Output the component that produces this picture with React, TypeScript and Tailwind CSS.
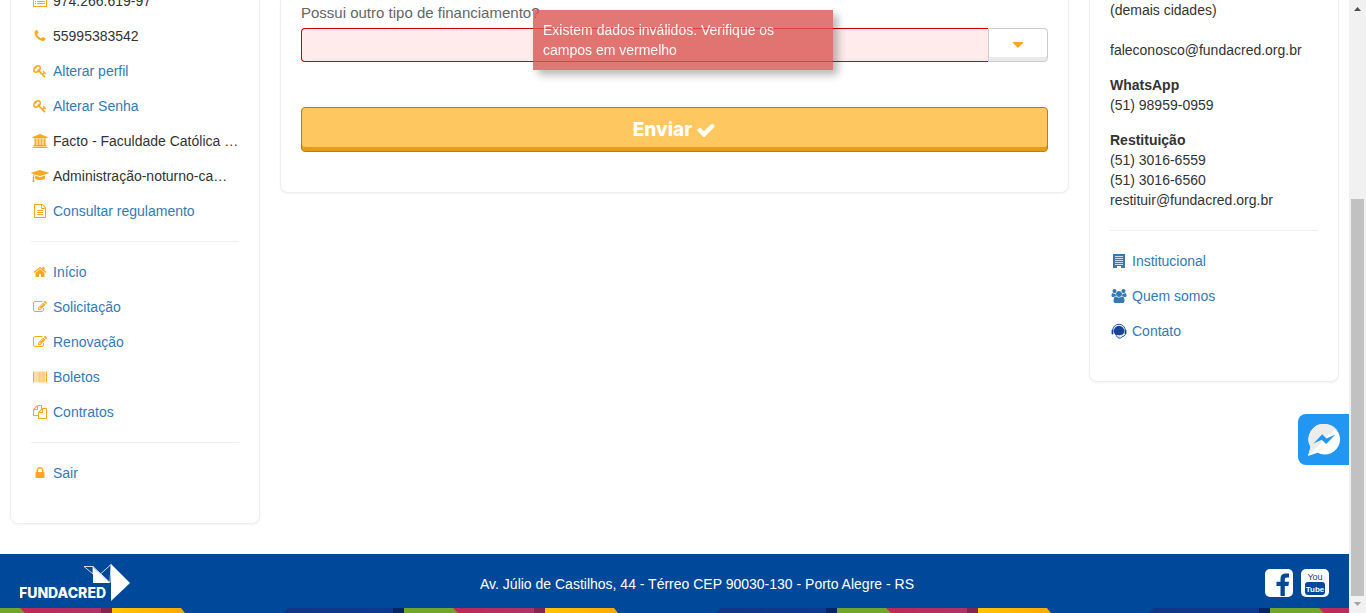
import type { ReactNode } from "react";

const paths = {
  phone:
    "M1600 1240q0 27-10 70.5t-21 68.5q-21 50-122 106-94 51-186 51-27 0-53-3.5t-57.5-12.5-47-14.5-55.5-20.5-49-18q-98-35-175-83-127-79-264-216t-216-264q-48-77-83-175-3-9-18-49t-20.5-55.5-14.5-47-12.5-57.5-3.5-53q0-92 51-186 56-101 106-122 25-11 68.5-21t70.5-10q14 0 21 3 18 6 53 76 11 19 30 54t35 63.5 31 53.5q3 4 17.5 25t21.5 35.5 7 28.5q0 20-28.5 50t-62 55-62 53-28.5 46q0 9 5 22.5t8.5 20.5 14 24 11.5 19q76 137 174 235t235 174q2 1 19 11.5t24 14 20.5 8.5 22.5 5q18 0 46-28.5t53-62 55-62 50-28.5q14 0 28.5 7t35.5 21.5 25 17.5q25 15 53.5 31t63.5 35 54 30q70 35 76 53 3 7 3 21z",
  key: "M832 512q0-80-56-136t-136-56-136 56-56 136q0 42 19 83-41-19-83-19-80 0-136 56t-56 136 56 136 136 56 136-56 56-136q0-42-19-83 41 19 83 19 80 0 136-56t56-136zm851 704q0 17-49 66t-66 49q-9 0-28.5-16t-36.5-33-38.5-40-24.5-26l-96 96 220 220q28 28 28 68 0 42-39 81t-81 39q-40 0-68-28l-671-671q-176 131-365 131-163 0-265.5-102.5t-102.5-265.5q0-160 95-313t248-248 313-95q163 0 265.5 102.5t102.5 265.5q0 189-131 365l355 355 96-96q-3-3-26-24.5t-40-38.5-33-36.5-16-28.5q0-17 49-66t66-49q13 0 23 10 6 6 46 44.5t82 79.5 86.5 86 73 78 28.5 41z",
  bank: "M960 0l960 384v128h-128q0 26-20.5 45t-48.5 19h-1526q-28 0-48.5-19t-20.5-45h-128v-128zm-704 640h256v768h128v-768h256v768h128v-768h256v768h128v-768h256v768h59q28 0 48.5 19t20.5 45v64h-1664v-64q0-26 20.5-45t48.5-19h59v-768zm1595 960q28 0 48.5 19t20.5 45v128h-1920v-128q0-26 20.5-45t48.5-19h1782z",
  cap: "M1774 836l18 316q4 69-82 128t-235 93.5-323 34.5-323-34.5-235-93.5-82-128l18-316 574 181q22 7 48 7t48-7zm530-324q0 23-22 31l-1120 352q-4 1-10 1t-10-1l-652-206q-43 34-71 111.5t-34 178.5q63 36 63 109 0 69-58 107l58 433q2 14-8 25-9 11-24 11h-192q-15 0-24-11-10-11-8-25l58-433q-58-38-58-107 0-73 65-111 11-207 98-330l-333-104q-22-8-22-31t22-31l1120-352q4-1 10-1t10 1l1120 352q22 8 22 31z",
  file: "M1596 380q28 28 48 76t20 88v1152q0 40-28 68t-68 28h-1344q-40 0-68-28t-28-68v-1600q0-40 28-68t68-28h896q40 0 88 20t76 48zm-444-244v376h376q-10-29-22-41l-313-313q-12-12-41-22zm384 1528v-1024h-416q-40 0-68-28t-28-68v-416h-768v1536h1280zm-1024-864q0-14 9-23t23-9h704q14 0 23 9t9 23v64q0 14-9 23t-23 9h-704q-14 0-23-9t-9-23v-64zm736 224q14 0 23 9t9 23v64q0 14-9 23t-23 9h-704q-14 0-23-9t-9-23v-64q0-14 9-23t23-9h704zm0 256q14 0 23 9t9 23v64q0 14-9 23t-23 9h-704q-14 0-23-9t-9-23v-64q0-14 9-23t23-9h704z",
  home: "M1472 992v480q0 26-19 45t-45 19h-384v-384h-256v384h-384q-26 0-45-19t-19-45v-480q0-1 .5-3t.5-3l575-474 575 474q1 2 1 6zm223-69l-62 74q-8 9-21 11h-3q-13 0-21-7l-692-577-692 577q-12 8-24 7-13-2-21-11l-62-74q-8-10-7-23.5t11-21.5l719-599q32-26 76-26t76 26l244 204v-195q0-14 9-23t23-9h192q14 0 23 9t9 23v408l219 182q10 8 11 21.5t-7 23.5z",
  edit: "M888 1184l116-116-152-152-116 116v56h96v96h56zm440-720q-16-16-33 1l-350 350q-17 17-1 33t33-1l350-350q17-17 1-33zm80 594v190q0 119-84.5 203.5t-203.5 84.5h-832q-119 0-203.5-84.5t-84.5-203.5v-832q0-119 84.5-203.5t203.5-84.5h832q63 0 117 25 15 7 18 23 3 17-9 29l-49 49q-14 14-32 8-23-6-45-6h-832q-66 0-113 47t-47 113v832q0 66 47 113t113 47h832q66 0 113-47t47-113v-126q0-13 9-22l64-64q15-15 35-7t20 29zm-96-738l288 288-672 672h-288v-288zm444 132l-92 92-288-288 92-92q28-28 68-28t68 28l152 152q28 28 28 68t-28 68z",
  barcode:
    "M0 200h120v1392h-120zM190 200h50v1392h-50zM310 200h50v1392h-50zM430 200h50v1392h-50zM590 200h110v1392h-110zM820 200h110v1392h-110zM990 200h50v1392h-50zM1110 200h110v1392h-110zM1340 200h110v1392h-110zM1510 200h60v1392h-60zM1670 200h122v1392h-122z",
  copy: "M1696 384q40 0 68 28t28 68v1216q0 40-28 68t-68 28h-960q-40 0-68-28t-28-68v-288h-544q-40 0-68-28t-28-68v-672q0-40 20-88t48-76l408-408q28-28 76-48t88-20h416q40 0 68 28t28 68v328q68-40 128-40h416zm-544 213l-299 299h299v-299zm-640-384l-299 299h299v-299zm196 647l316-316v-416h-384v416q0 40-28 68t-68 28h-416v640h512v-256q0-40 20-88t48-76zm956 804v-1152h-384v416q0 40-28 68t-68 28h-416v640h896z",
  lock: "M640 768h512v-192q0-106-75-181t-181-75-181 75-75 181v192zm832 96v576q0 40-28 68t-68 28h-960q-40 0-68-28t-28-68v-576q0-40 28-68t68-28h32v-192q0-184 132-316t316-132 316 132 132 316v192h32q40 0 68 28t28 68z",
  check:
    "M1671 566q0 40-28 68l-724 724-136 136q-28 28-68 28t-68-28l-136-136-362-362q-28-28-28-68t28-68l136-136q28-28 68-28t68 28l294 295 656-657q28-28 68-28t68 28l136 136q28 28 28 68z",
  users:
    "M593 896q-162 5-265 128h-134q-82 0-138-40.5t-56-118.5q0-353 124-353 6 0 43.5 21t97.5 42.5 119 21.5q67 0 133-23-5 37-5 66 0 139 81 256zm1071 637q0 120-73 189.5t-194 69.5h-874q-121 0-194-69.5t-73-189.5q0-53 3.5-103.5t14-109 26.5-108.5 43-97.5 62-81 85.5-53.5 111.5-20q10 0 43 21.5t73 48 107 48 135 21.5 135-21.5 107-48 73-48 43-21.5q61 0 111.5 20t85.5 53.5 62 81 43 97.5 26.5 108.5 14 109 3.5 103.5zm-1024-1277q0 106-75 181t-181 75-181-75-75-181 75-181 181-75 181 75 75 181zm704 384q0 159-112.5 271.5t-271.5 112.5-271.5-112.5-112.5-271.5 112.5-271.5 271.5-112.5 271.5 112.5 112.5 271.5zm576 225q0 78-56 118.5t-138 40.5h-134q-103-123-265-128 81-117 81-256 0-29-5-66 66 23 133 23 59 0 119-21.5t97.5-42.5 43.5-21q124 0 124 353zm-128-609q0 106-75 181t-181 75-181-75-75-181 75-181 181-75 181 75 75 181z",
  card: "M0 128h1792v1536h-1792zM128 512v1024h1536v-1024zM256 640h128v128h-128zM512 640h1024v128h-1024zM256 896h128v128h-128zM512 896h1024v128h-1024zM256 1152h128v128h-128zM512 1152h1024v128h-1024z",
  building:
    "M128 0h1536v1792h-512v-256h-512v256h-512zM384 256v110h1024v-110zM384 512v110h1024v-110zM384 768v110h1024v-110zM384 1024v110h1024v-110zM384 1280v110h1024v-110z",
};

type IconName = keyof typeof paths;

function Icon({ name, className = "h-[14px] w-[14px]", width = 1792 }: { name: IconName; className?: string; width?: number }) {
  return (
    <svg viewBox={`0 0 ${width} 1792`} className={className} fill="currentColor" fillRule={name === "card" || name === "building" ? "evenodd" : "nonzero"} aria-hidden="true">
      <path d={paths[name]} />
    </svg>
  );
}

function HeadsetIcon() {
  return (
    <svg viewBox="0 0 16 16" className="h-4 w-4" aria-hidden="true">
      <circle cx="8" cy="8" r="5.200" fill="#17429b" />
      <path d="M1.700 8.500V7.500a6.300 6.300 0 0 1 12.600 0v1" fill="none" stroke="#17429b" strokeWidth="0.9" />
      <rect x="0.600" y="6.500" width="1.800" height="5" rx="0.900" fill="#17429b" />
      <rect x="13.600" y="6.500" width="1.800" height="5" rx="0.900" fill="#17429b" />
      <path d="M6 12.400q3 1 5.500-.6" fill="none" stroke="#fff" strokeWidth="0.9" />
      <path d="M5.500 13q1.500 2.600 4 2.200l1.200-1.200q2.200-.3 3.500-2.500" fill="none" stroke="#17429b" strokeWidth="1" />
    </svg>
  );
}

function Item({ icon, children, href }: { icon: ReactNode; children: ReactNode; href?: string }) {
  const inner = (
    <>
      <span className="flex w-[18px] shrink-0 justify-center">{icon}</span>
      <span className="whitespace-nowrap">{children}</span>
    </>
  );
  return (
    <li className="h-5">
      {href ? (
        <a href={href} className="flex items-center gap-1 text-[#337ab7]">
          {inner}
        </a>
      ) : (
        <div className="flex items-center gap-1">{inner}</div>
      )}
    </li>
  );
}

const card = "rounded-b-lg border border-t-0 border-[#eee] bg-white px-5 shadow-[0_1px_2px_rgba(0,0,0,0.05)]";
const list = "flex flex-col gap-[15px]";

function Orange({ name }: { name: IconName }) {
  return <Icon name={name} className="h-[14px] w-[14px] text-[#ffa81f]" />;
}

function ProfilePanel() {
  return (
    <aside className={`${card} pb-10`}>
      <ul className={`${list} -mt-[9px]`}>
        <Item icon={<Orange name="card" />}>974.266.619-97</Item>
        <Item icon={<Orange name="phone" />}>55995383542</Item>
        <Item href="#perfil" icon={<Orange name="key" />}>Alterar perfil</Item>
        <Item href="#senha" icon={<Orange name="key" />}>Alterar Senha</Item>
        <Item icon={<Icon name="bank" width={1920} className="h-[14px] w-4 text-[#ffa81f]" />}>Facto - Faculdade Católica …</Item>
        <Item icon={<Icon name="cap" width={2304} className="h-[14px] w-[18px] text-[#ffa81f]" />}>Administração-noturno-ca…</Item>
        <Item href="#regulamento" icon={<Orange name="file" />}>Consultar regulamento</Item>
      </ul>
      <hr className="my-5 border-[#eee]" />
      <nav aria-label="Menu">
        <ul className={list}>
          <Item href="#inicio" icon={<Orange name="home" />}>Início</Item>
          <Item href="#solicitacao" icon={<Orange name="edit" />}>Solicitação</Item>
          <Item href="#renovacao" icon={<Orange name="edit" />}>Renovação</Item>
          <Item href="#boletos" icon={<Orange name="barcode" />}>Boletos</Item>
          <Item href="#contratos" icon={<Orange name="copy" />}>Contratos</Item>
        </ul>
      </nav>
      <hr className="my-5 border-[#eee]" />
      <ul>
        <Item href="#sair" icon={<Orange name="lock" />}>Sair</Item>
      </ul>
    </aside>
  );
}

function FormPanel() {
  return (
    <main className={`${card} pt-[3px] pb-10`}>
      <form onSubmit={(e) => e.preventDefault()}>
        <label htmlFor="financiamento" className="mb-[5px] block text-[15px] leading-5 text-[#666]">
          Possui outro tipo de financiamento?
        </label>
        <div className="flex h-[34px]">
          <input
            id="financiamento"
            type="text"
            aria-invalid="true"
            className="min-w-0 flex-1 rounded-l border border-r-0 border-[#c00] bg-[#ffebeb] px-3 outline-none"
          />
          <button
            type="button"
            aria-label="Abrir opções"
            className="flex w-[60px] items-center justify-center rounded-r border border-[#ccc] bg-white shadow-[inset_0_-4px_0_#eaeaea]"
          >
            <svg viewBox="0 0 10 6" className="h-[6px] w-[10px] fill-[#ffa81f]" aria-hidden="true">
              <path d="M0 0h10v1L5 6 0 1z" />
            </svg>
          </button>
        </div>
        <button
          type="submit"
          className="mt-[45px] flex h-[45px] w-full items-center justify-center gap-1 rounded border border-[#bd7c10] bg-[#ffc760] font-['Inter',sans-serif] text-[19px] font-extrabold text-white shadow-[inset_0_-4px_0_#e69c17]"
        >
          Enviar
          <Icon name="check" className="h-5 w-5" />
        </button>
      </form>
    </main>
  );
}

function ContactPanel() {
  return (
    <aside className={`${card} pb-10`}>
      <p>(demais cidades)</p>
      <p className="mt-5">faleconosco@fundacred.org.br</p>
      <p className="mt-[15px] font-bold">WhatsApp</p>
      <p>(51) 98959-0959</p>
      <p className="mt-[15px] font-bold">Restituição</p>
      <p>(51) 3016-6559</p>
      <p>(51) 3016-6560</p>
      <p>restituir@fundacred.org.br</p>
      <hr className="my-5 border-[#eee]" />
      <ul className={list}>
        <Item href="#institucional" icon={<Icon name="building" />}>Institucional</Item>
        <Item href="#quem-somos" icon={<Icon name="users" width={1920} className="h-[14px] w-4" />}>Quem somos</Item>
        <Item href="#contato" icon={<HeadsetIcon />}>Contato</Item>
      </ul>
    </aside>
  );
}

function Logo() {
  return (
    <svg viewBox="0 0 112 40" className="h-10 w-[112px]" role="img" aria-label="FUNDACRED">
      <path d="M91 1l19 19-19 18z" fill="#fff" />
      <path d="M64 3.500h9M64 3.500l9 7.500v-7.500l17 16L91 1.500l-10 9" fill="none" stroke="#fff" strokeWidth="0.8" />
      <path d="M73 4l17 16H73z" fill="#fff" />
      <text x="-1" y="35" fill="#fff" fontFamily="Inter, sans-serif" fontWeight="800" fontSize="14">
        FUNDACRED
      </text>
    </svg>
  );
}

function StripeBand() {
  return (
    <svg className="block h-[5px] w-full" aria-hidden="true">
      <defs>
        <linearGradient id="pink">
          <stop offset="0" stopColor="#c02858" />
          <stop offset="1" stopColor="#b03366" />
        </linearGradient>
        <linearGradient id="yellow">
          <stop offset="0" stopColor="#ffc400" />
          <stop offset="1" stopColor="#ffa800" />
        </linearGradient>
        <linearGradient id="navy">
          <stop offset="0" stopColor="#123686" />
          <stop offset="1" stopColor="#0c398f" />
        </linearGradient>
        <pattern id="band" x="-29" y="0" width="433" height="5" patternUnits="userSpaceOnUse">
          <path d="M0 0h433v5H0z" fill="#004899" />
          <path d="M0 0h54v5H0z" fill="#72a52c" />
          <path d="M49 0h81v5H54z" fill="url(#pink)" />
          <path d="M130 0h11v5h-11z" fill="#83254f" />
          <path d="M141 0h69l4 5h-73z" fill="url(#yellow)" />
          <path d="M317 0h105v5H312z" fill="url(#navy)" />
          <path d="M422 0h11v5h-11z" fill="#082563" />
        </pattern>
      </defs>
      <rect width="100%" height="5" fill="url(#band)" />
    </svg>
  );
}

function Footer() {
  return (
    <footer className="mt-[30px] bg-[#004899] text-white">
      <div className="flex h-[54px] items-center justify-between px-5">
        <div className="flex flex-1 pt-1">
          <Logo />
        </div>
        <p className="pt-[6px] pl-[45px]">Av. Júlio de Castilhos, 44 - Térreo CEP 90030-130 - Porto Alegre - RS</p>
        <div className="flex flex-1 justify-end gap-2 pt-[3px]">
          <a href="#facebook" aria-label="Facebook">
            <svg viewBox="0 0 28 28" className="h-7 w-7" aria-hidden="true">
              <rect width="28" height="28" rx="5" fill="#fff" />
              <path d="M15.500 27V17h-4v-4.300h4V9.500c0-3.400 2-5 5-5h3.500v3.900h-2.200c-1.600 0-2 .8-2 2v2.300H24l-.6 4.300h-3.600v10z" fill="#004899" />
            </svg>
          </a>
          <a href="#youtube" aria-label="YouTube">
            <svg viewBox="0 0 28 28" className="h-7 w-7" aria-hidden="true">
              <rect width="28" height="28" rx="5" fill="#fff" />
              <rect x="4" y="13" width="20" height="13" rx="3" fill="#004899" />
              <g fontFamily="'Liberation Sans Narrow', 'Liberation Sans', sans-serif" textAnchor="middle">
                <text x="14" y="11" fontSize="9" fill="#004899">You</text>
                <text x="14" y="23" fontSize="8" fontWeight="700" fill="#fff">Tube</text>
              </g>
            </svg>
          </a>
        </div>
      </div>
      <StripeBand />
    </footer>
  );
}

function Scrollbar() {
  return (
    <div className="sticky top-0 flex h-screen w-[17px] shrink-0 flex-col items-center bg-[#f1f1f1]" aria-hidden="true">
      <svg viewBox="0 0 17 17" className="h-[17px] w-[17px] fill-[#505050]">
        <path d="M5 11h7L8.500 7z" />
      </svg>
      <div className="mt-[182px] w-[13px] flex-1 bg-[#c1c1c1]" />
      <svg viewBox="0 0 17 17" className="h-[17px] w-[17px] fill-[#a3a3a3]">
        <path d="M5 6h7l-3.500 4z" />
      </svg>
    </div>
  );
}

export default function App() {
  return (
    <div className="flex bg-white font-['Liberation_Sans',Arial,sans-serif] text-[14px] leading-5 text-[#333]">
      <div className="min-w-0 flex-1 overflow-hidden">
        <div className="grid grid-cols-[250px_minmax(0,1fr)_250px] items-start gap-5 px-[10px]">
          <ProfilePanel />
          <FormPanel />
          <ContactPanel />
        </div>
        <Footer />
      </div>
      <Scrollbar />
      <div
        role="alert"
        className="fixed top-[10px] left-1/2 -ml-[150px] w-[300px] bg-[#da5753] p-[10px] text-white opacity-80 shadow-[5px_5px_8px_rgba(0,0,0,0.35)]"
      >
        Existem dados inválidos. Verifique os campos em vermelho
      </div>
      <button type="button" aria-label="Messenger" className="fixed top-[414px] right-[17px] flex h-[51px] w-[51px] items-center justify-center rounded-l-lg bg-[#2196f3]">
        <svg viewBox="0 0 32 32" className="h-8 w-8" aria-hidden="true">
          <path d="M16.500 0a15.300 15.300 0 1 1-7 28.800L0 32l2.600-9A15.300 15.300 0 0 1 16.500 0z" fill="#fff" />
          <path d="M16.500 0a15.300 15.300 0 0 1 10.800 4.500L0 32l2.600-9A15.300 15.300 0 0 1 16.500 0z" fill="#ececec" />
          <path d="M5.500 19.500l8.700-9.300 4.200 4.200 9-4-9.200 9.600-4.500-4.200z" fill="#2196f3" />
        </svg>
      </button>
    </div>
  );
}
